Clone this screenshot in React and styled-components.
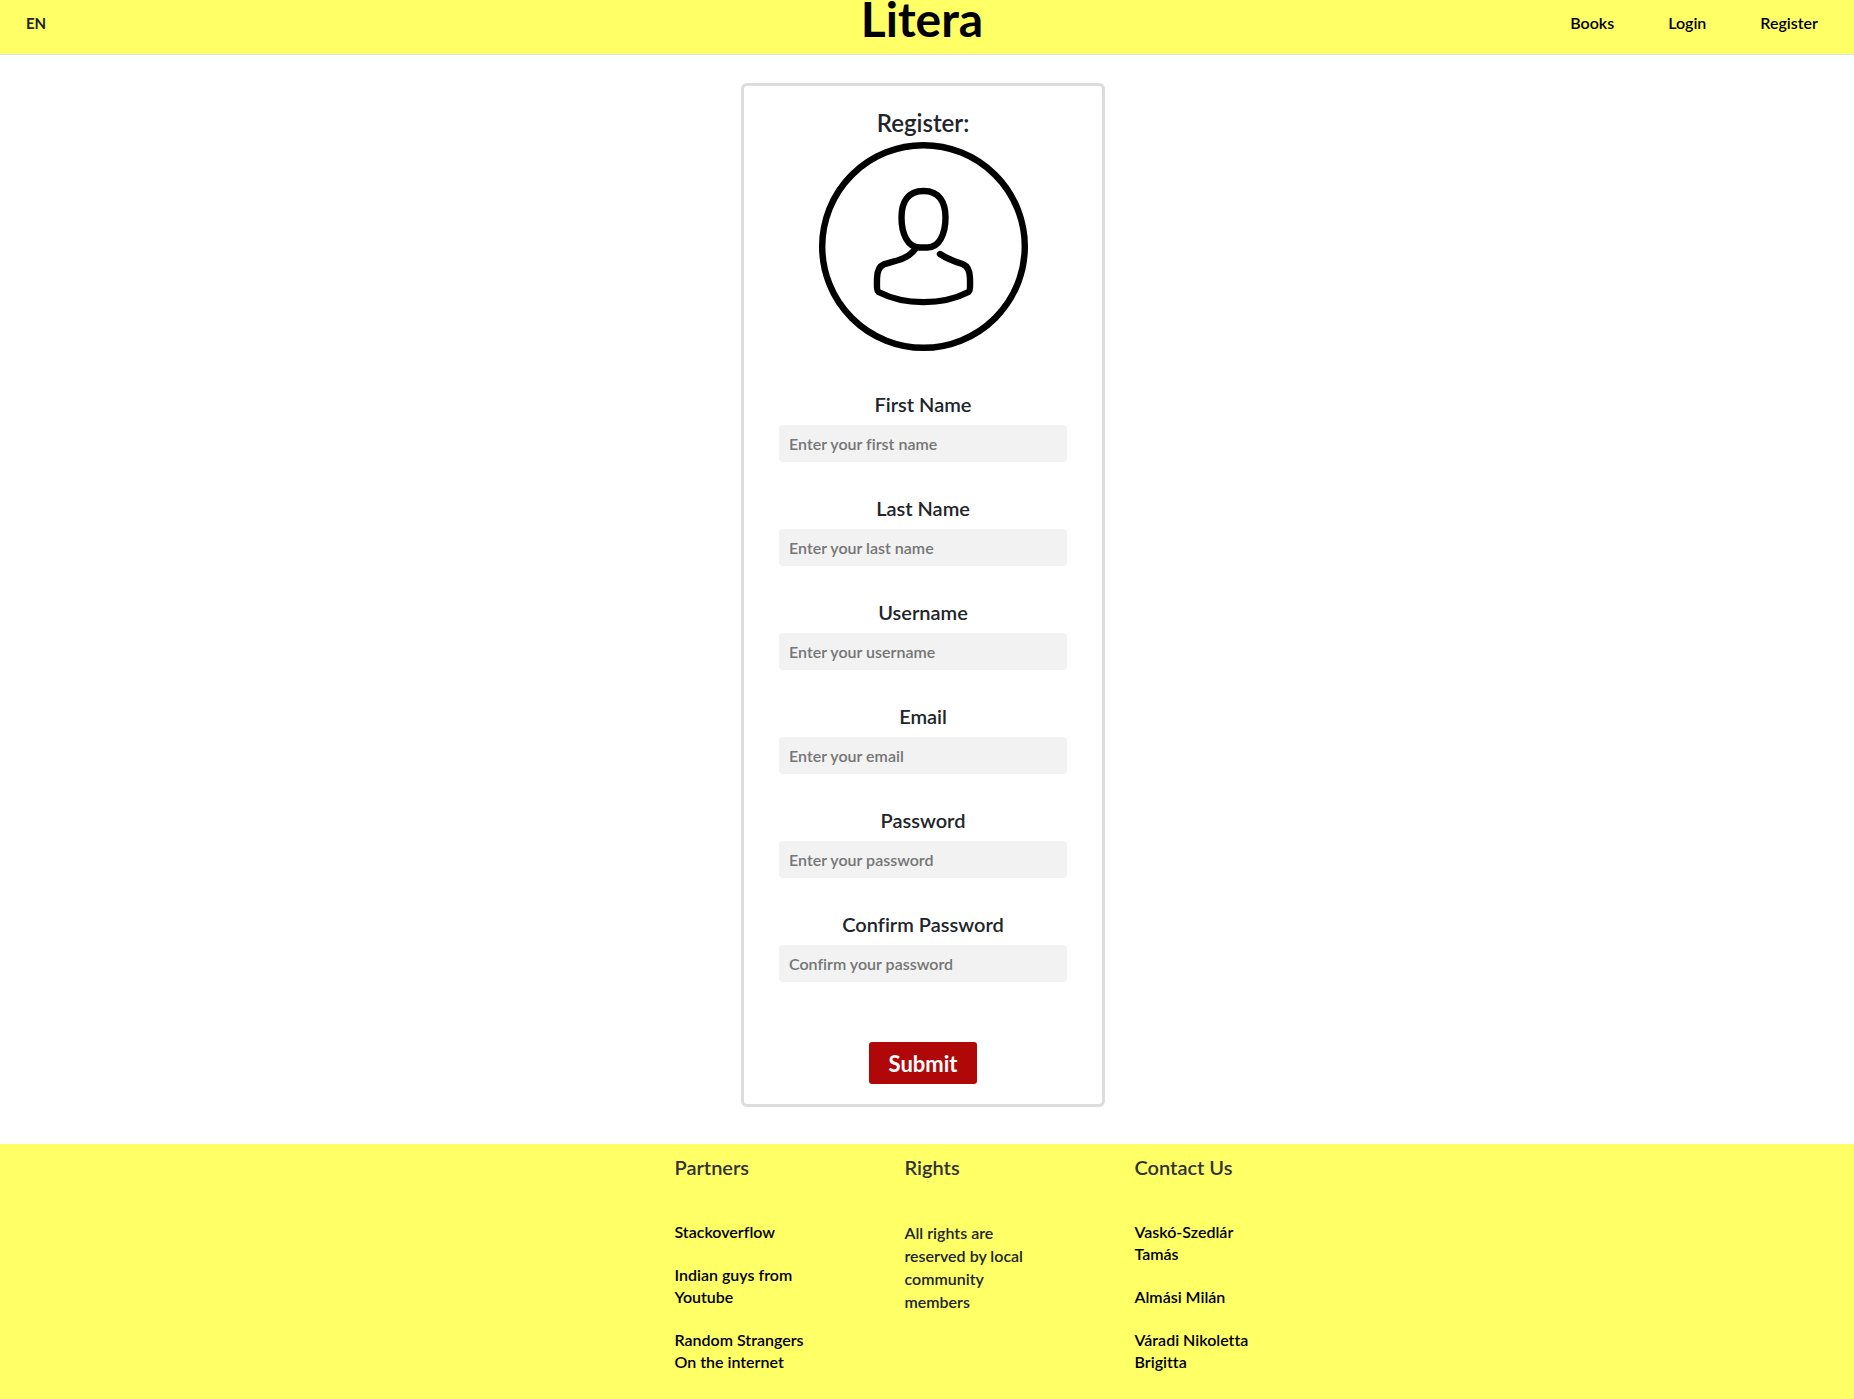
import React from 'react';
import styled, { createGlobalStyle } from 'styled-components';

const GlobalStyle = createGlobalStyle`
  *, *::before, *::after { box-sizing: border-box; }
  body {
    margin: 0;
    background: #ffffff;
    color: #212529;
    font-family: Lato, "Liberation Sans", sans-serif;
    font-size: 16px;
    font-weight: 600;
    line-height: 24px;
    font-variant-ligatures: none;
  }
`;

const Page = styled.div`
  display: flex;
  flex-direction: column;
  min-height: 100vh;
`;

const Header = styled.header`
  display: grid;
  grid-template-columns: 1fr auto 1fr;
  align-items: start;
  height: 55px;
  padding: 0 36px 0 26px;
  background: #ffff66;
  border-bottom: 1px solid #dee2e6;
`;

const Language = styled.button`
  justify-self: start;
  margin-top: 11px;
  padding: 0;
  border: 0;
  background: none;
  color: #212529;
  font: inherit;
  font-size: 15px;
  font-weight: 700;
  cursor: pointer;
`;

const Logo = styled.a`
  color: #000000;
  font-size: 48px;
  font-weight: 700;
  line-height: 38px;
  text-decoration: none;
`;

const Nav = styled.nav`
  display: flex;
  justify-content: flex-end;
  gap: 54px;
  margin-top: 11px;
`;

const NavLink = styled.a`
  color: #000000;
  text-decoration: none;
`;

const Main = styled.main`
  display: flex;
  justify-content: center;
  padding: 28px 8px 37px 0;
`;

const Card = styled.form`
  display: flex;
  flex-direction: column;
  align-items: center;
  width: 364px;
  padding: 20px 35px;
  border: 3px solid #dcdcdc;
  border-radius: 6px;
`;

const Title = styled.h1`
  margin: 0 0 1px;
  font-size: 24px;
  font-weight: 600;
  line-height: 34px;
`;

const Avatar = styled.svg`
  display: block;
  width: 210px;
  height: 210px;
  margin-bottom: 38px;
`;

const Fields = styled.div`
  display: flex;
  flex-direction: column;
  gap: 31px;
  width: 100%;
  margin-bottom: 60px;
`;

const Field = styled.div`
  display: flex;
  flex-direction: column;
  gap: 6px;
`;

const Label = styled.label`
  font-size: 20px;
  line-height: 30px;
  text-align: center;
`;

const TextInput = styled.input`
  width: 100%;
  height: 37px;
  padding: 0 10px;
  border: 0;
  border-radius: 4px;
  background: #f2f2f2;
  color: #212529;
  font: inherit;
  font-variant-ligatures: none;

  &::placeholder {
    color: #757575;
    opacity: 1;
  }
`;

const SubmitButton = styled.button`
  width: 108px;
  height: 42px;
  padding: 0;
  border: 0;
  border-radius: 3px;
  background: #b00808;
  color: #ffffff;
  font-family: inherit;
  font-size: 22px;
  font-weight: 700;
  cursor: pointer;
`;

const Footer = styled.footer`
  display: flex;
  flex: 1;
  justify-content: center;
  gap: 98px;
  padding: 8px 0 20px 87px;
  background: #ffff66;
`;

const Column = styled.section`
  width: 132px;
`;

const ColumnTitle = styled.h2`
  margin: 0 0 39px;
  color: #333333;
  font-size: 20px;
  font-weight: 600;
  line-height: 30px;
`;

const LinkList = styled.ul`
  display: flex;
  flex-direction: column;
  gap: 21px;
  margin: 0;
  padding: 0;
  list-style: none;
  line-height: 22px;
`;

const FooterLink = styled.a`
  color: #000000;
  text-decoration: none;
`;

const Rights = styled.p`
  margin: 0;
  line-height: 23px;
`;

const fields = [
  { id: 'firstName', label: 'First Name', placeholder: 'Enter your first name', type: 'text' },
  { id: 'lastName', label: 'Last Name', placeholder: 'Enter your last name', type: 'text' },
  { id: 'username', label: 'Username', placeholder: 'Enter your username', type: 'text' },
  { id: 'email', label: 'Email', placeholder: 'Enter your email', type: 'email' },
  { id: 'password', label: 'Password', placeholder: 'Enter your password', type: 'password' },
  { id: 'confirmPassword', label: 'Confirm Password', placeholder: 'Confirm your password', type: 'password' },
];

const partners = ['Stackoverflow', 'Indian guys from Youtube', 'Random Strangers On the internet'];
const contacts = ['Vaskó-Szedlár Tamás', 'Almási Milán', 'Váradi Nikoletta Brigitta'];

function FooterLinks({ items }) {
  return (
    <LinkList>
      {items.map((item) => (
        <li key={item}>
          <FooterLink href="#">{item}</FooterLink>
        </li>
      ))}
    </LinkList>
  );
}

export default function App() {
  return (
    <Page>
      <GlobalStyle />
      <Header>
        <Language type="button">EN</Language>
        <Logo href="#">Litera</Logo>
        <Nav>
          <NavLink href="#">Books</NavLink>
          <NavLink href="#">Login</NavLink>
          <NavLink href="#">Register</NavLink>
        </Nav>
      </Header>
      <Main>
        <Card onSubmit={(event) => event.preventDefault()}>
          <Title>Register:</Title>
          <Avatar viewBox="0 0 210 210" fill="none" stroke="#000000" strokeWidth="6.4" strokeLinecap="round" strokeLinejoin="round" aria-hidden="true">
            <circle cx="105.5" cy="105.5" r="101.3" />
            <path d="M105.5 50C89.5 50 83.500 61.500 83.500 76.500C83.500 92.500 89.500 106.500 101.500 106.500H109.500C121.500 106.500 127.500 92.500 127.500 76.500C127.500 61.500 121.500 50 105.500 50Z" />
            <path d="M97.500 107.500C90.500 118 77.500 120 66.500 123C60.500 125.500 59 130.500 59 137.500C59 143.500 58.500 149.500 60.500 151C86.500 164.500 124.500 164.500 150.500 151C152.500 149.500 152 143.500 152 137.500C152 130.500 150.500 125.500 144.500 123C136.500 120.500 129.500 118 122 113" />
          </Avatar>
          <Fields>
            {fields.map((field) => (
              <Field key={field.id}>
                <Label htmlFor={field.id}>{field.label}</Label>
                <TextInput id={field.id} type={field.type} placeholder={field.placeholder} />
              </Field>
            ))}
          </Fields>
          <SubmitButton type="submit">Submit</SubmitButton>
        </Card>
      </Main>
      <Footer>
        <Column>
          <ColumnTitle>Partners</ColumnTitle>
          <FooterLinks items={partners} />
        </Column>
        <Column>
          <ColumnTitle>Rights</ColumnTitle>
          <Rights>All rights are reserved by local community members</Rights>
        </Column>
        <Column>
          <ColumnTitle>Contact Us</ColumnTitle>
          <FooterLinks items={contacts} />
        </Column>
      </Footer>
    </Page>
  );
}
